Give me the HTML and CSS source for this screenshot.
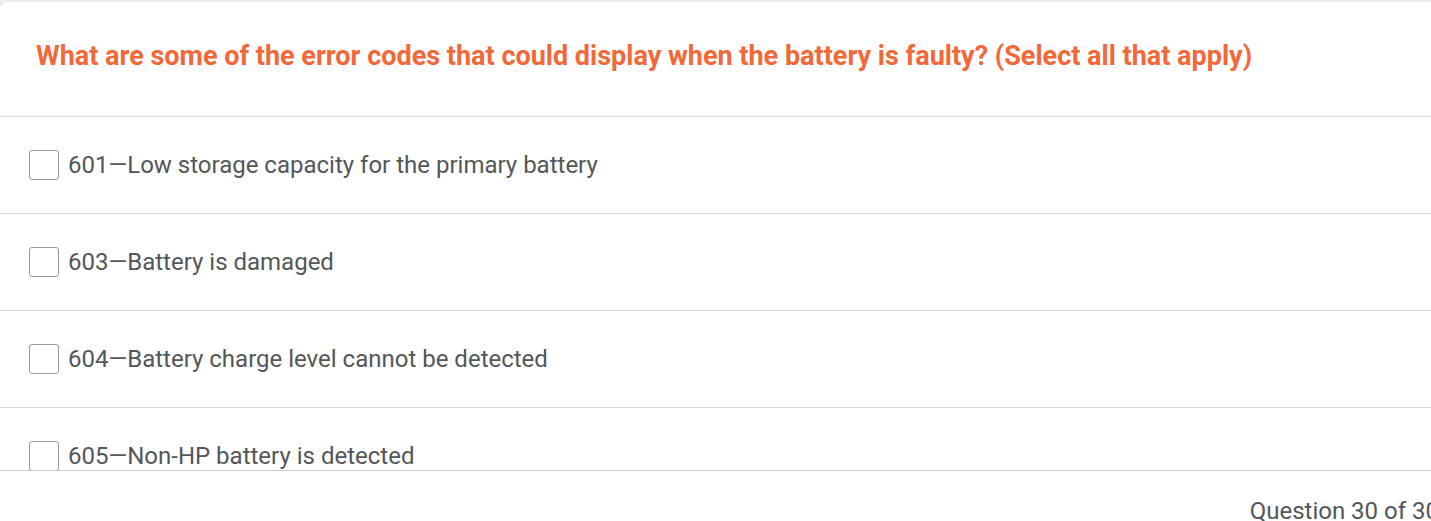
FILE: index.html
```html
<!DOCTYPE html>
<html>
<head>
<meta charset="utf-8">
<link rel="stylesheet" href="styles.css">
</head>
<body>
<div class="page">
  <div class="card">
    <div class="header">
      <h1 class="title">What are some of the error codes that could display when the battery is faulty? (Select all that apply)</h1>
    </div>
    <div class="options">
      <label class="option"><span class="box"></span><span class="text">601—Low storage capacity for the primary battery</span></label>
      <label class="option"><span class="box"></span><span class="text">603—Battery is damaged</span></label>
      <label class="option"><span class="box"></span><span class="text">604—Battery charge level cannot be detected</span></label>
      <label class="option"><span class="box"></span><span class="text">605—Non-HP battery is detected</span></label>
    </div>
    <div class="footer">
      <span class="counter">Question 30 of 30</span>
    </div>
  </div>
</div>
</body>
</html>
```
FILE: styles.css
```css
html, body {
  margin: 0;
  padding: 0;
  background: #ececec;
  overflow: hidden;
  height: 521px;
}
.page {
  padding-top: 2px;
}
.card {
  background: #fff;
  border-top-left-radius: 8px;
  height: 519px;
  display: flex;
  flex-direction: column;
  font-family: Roboto, "Liberation Sans", sans-serif;
  overflow: hidden;
}
.header {
  height: 115px;
  flex: none;
  border-bottom: 1px solid #dcdcdc;
  display: flex;
  align-items: center;
  padding-left: 36px;
  box-sizing: border-box;
}
.title {
  margin: 0;
  font-size: 27px;
  font-weight: 700;
  color: #f26838;
  line-height: 32px;
  padding-bottom: 6px;
}
.options {
  height: 353px;
  overflow: hidden;
  border-bottom: 1px solid #c8c8c8;
  flex: none;
}
.option {
  display: flex;
  align-items: center;
  height: 96px;
  border-bottom: 1px solid #dcdcdc;
  padding-left: 29px;
}
.box {
  width: 28px;
  height: 28px;
  border: 1px solid #9a9a9a;
  border-radius: 3px;
  flex: none;
  margin-right: 9px;
}
.text {
  font-size: 24px;
  color: #54565a;
}
.footer {
  flex: 1;
  display: flex;
  justify-content: flex-end;
  align-items: flex-end;
  margin-right: -8px;
  margin-bottom: -4px;
}
.counter {
  font-size: 24px;
  color: #54565a;
  line-height: 28px;
}
```
